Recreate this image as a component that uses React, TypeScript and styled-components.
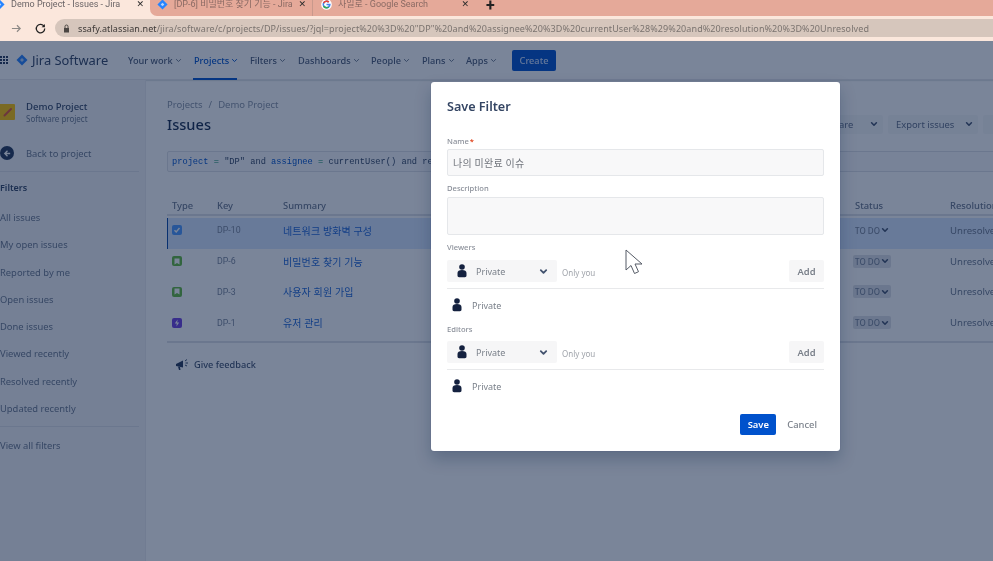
import React from "react";
import styled, { createGlobalStyle } from "styled-components";

const Global = createGlobalStyle`
  html, body { margin: 0; padding: 0; height: 100%; overflow: hidden; background: #fff; }
  #root { height: 100%; }
  * { box-sizing: border-box; }
`;

const sans = `"Noto Sans", "Noto Sans CJK KR", sans-serif`;

const Screen = styled.div`
  width: 993px; height: 561px; overflow: hidden; display: flex; flex-direction: column;
  font-family: ${sans}; filter: blur(0.5px);
`;
const TabStrip = styled.div`
  height: 16px; flex: none; display: flex; background: #fbe7dc; overflow: hidden;
  font-family: Roboto, "Noto Sans CJK KR", sans-serif; font-size: 9px; line-height: 9px;
`;
const Tab = styled.div<{ $w: number; $active?: boolean; $pad?: number; $first?: boolean; $rule?: boolean }>`
  width: ${p => p.$w}px; flex: none; display: flex; align-items: center; gap: 6px; height: 16px;
  padding: 0 6px 7px ${p => p.$pad ?? 6}px;
  background: ${p => (p.$active ? "#fbe7dc" : "#e5a999")};
  color: ${p => (p.$active ? "#6a6466" : "#8a6a64")};
  border-bottom-left-radius: ${p => (p.$first ? "7px" : "0")};
  box-shadow: ${p => (p.$rule ? "inset 1px 0 0 #c9998c" : "none")};
  overflow: hidden; white-space: nowrap;
`;
const TabTitle = styled.span` flex: 1; overflow: hidden; padding: 1px 0; `;
const TabClose = styled.span` color: #2c2c2c; font-size: 9px; font-weight: 700; font-family: "DejaVu Sans", sans-serif; `;
const TabRest = styled.div`
  flex: 1; background: #e5a999; padding: 0 0 0 11px; font-size: 16px; line-height: 11px; font-weight: 700; color: #222;
`;
const UrlBar = styled.div`
  height: 25px; flex: none; background: #fbe7dc; display: flex; align-items: center; padding: 3px 0 4px;
`;
const UrlNavIcons = styled.div` width: 55px; flex: none; display: flex; align-items: center; gap: 13px; padding-left: 11px; `;
const UrlPill = styled.div`
  flex: 1; height: 18px; background: #d6c6bc; border-radius: 9px 0 0 9px; display: flex; align-items: center; gap: 8px;
  padding-left: 8px; font-size: 9px; color: #7a736f; white-space: nowrap; overflow: hidden; letter-spacing: 0.09px;
`;
const UrlHost = styled.span` color: #3d3937; `;

const Page = styled.div` position: relative; flex: 1; min-height: 0; background: #fff; overflow: hidden; `;
const Blanket = styled.div` position: absolute; inset: 0; background: rgba(9, 30, 66, 0.54); `;

const Nav = styled.div`
  height: 39px; display: flex; align-items: center; border-bottom: 1px solid #e6e8ec;
  box-shadow: 0 1px 1px rgba(9,30,66,.12);
`;
const Apps = styled.div` display: grid; grid-template-columns: repeat(3, 2px); gap: 1px; width: 8px; `;
const AppDot = styled.i` width: 2px; height: 2px; background: #253858; display: block; `;
const Brand = styled.div` display: flex; align-items: center; gap: 4px; margin-left: 8px; width: 112px; `;
const BrandText = styled.span` font-size: 12.9px; color: #344563; `;
const NavItem = styled.div<{ $active?: boolean; $w: number }>`
  position: relative; width: ${p => p.$w}px; height: 39px; display: flex; align-items: center; gap: 2px; flex: none;
  font-size: 9.2px; font-weight: 500; color: ${p => (p.$active ? "#0052cc" : "#4c5b76")};
  &::after { content: ""; display: ${p => (p.$active ? "block" : "none")}; position: absolute; left: -1px; width: 44px; bottom: 0; height: 2px; background: #0052cc; }
`;
const CreateButton = styled.div`
  width: 44px; height: 21px; background: #0052cc; border-radius: 2px; color: #cfe0ff; font-size: 9.2px; font-weight: 500;
  display: flex; align-items: center; justify-content: center; margin-left: 7px;
`;

const Body = styled.div` height: 481px; display: flex; `;
const Sidebar = styled.div`
  width: 146px; flex: none; background: #f4f5f7; border-right: 1px solid #ebecf0; display: flex; flex-direction: column;
  font-size: 9.4px; color: #6b778c; padding-top: 24px;
`;
const ProjectRow = styled.div` display: flex; align-items: center; gap: 11px; height: 16px; `;
const ProjectAvatar = styled.div` width: 15px; height: 16px; background: #ffc400; border-radius: 0 1px 1px 0; display: flex; align-items: center; justify-content: center; flex: none; `;
const ProjectName = styled.div` font-size: 9.5px; font-weight: 500; color: #344563; line-height: 13px; `;
const ProjectSub = styled.div` font-size: 8px; color: #6b778c; line-height: 12px; `;
const BackRow = styled.div` display: flex; align-items: center; gap: 12px; margin-top: 26px; height: 14px; color: #6b778c; `;
const BackCircle = styled.div` width: 14px; height: 14px; border-radius: 50%; background: #253858; flex: none; display: flex; align-items: center; justify-content: center; `;
const SideRule = styled.div<{ $mt: number }>` height: 1px; background: #dfe1e6; margin: ${p => p.$mt}px 6px 0 0; `;
const FilterHead = styled.div` font-size: 9px; font-weight: 600; color: #344563; margin: 10px 0 10px; line-height: 12px; `;
const SideLink = styled.div<{ $mt?: number }>` height: 27.3px; line-height: 27.3px; margin-top: ${p => p.$mt ?? 0}px; color: #6b778c; white-space: nowrap; `;
const Main = styled.div` flex: 1; min-width: 0; padding: 18px 0 0 21px; color: #172b4d; overflow: hidden; `;
const Crumbs = styled.div` font-size: 9.5px; color: #8993a4; line-height: 13px; display: flex; gap: 6px; `;
const HeadRow = styled.div` height: 26px; display: flex; align-items: center; `;
const Title = styled.h1` margin: 0; font-size: 14.6px; font-weight: 500; color: #172b4d; line-height: 22px; width: 653px; flex: none; `;
const HeadButton = styled.div<{ $w: number }>`
  width: ${p => p.$w}px; height: 19px; flex: none; margin-right: 5px; background: #f7f8f9; border-radius: 2px; display: flex; align-items: center;
  padding: 0 5px 0 8px; justify-content: space-between; font-size: 9.4px; color: #5e6c84; white-space: nowrap;
`;
const JqlBox = styled.div`
  height: 21px; margin-top: 14px; width: 840px; background: #fafbfc; border: 1px solid #dfe1e6; border-radius: 2px;
  display: flex; align-items: center; padding-left: 4px;
  font-family: "Liberation Mono", monospace; font-size: 8.7px; white-space: pre; color: #344563;
`;
const JqlKey = styled.span` color: #0052cc; `;
const JqlOp = styled.span` color: #00875a; `;
const Table = styled.div` margin-top: 25px; width: 840px; border-bottom: 2px solid #dfe1e6; `;
const Row = styled.div<{ $selected?: boolean; $head?: boolean }>`
  display: grid; grid-template-columns: 45px 66px 572px 95px 1fr;
  align-items: center; height: ${p => (p.$head ? "19px" : "30.8px")}; padding-left: 5px;
  padding-bottom: ${p => (p.$head ? "0" : "6px")};
  background: ${p => (p.$selected ? "#d7e6ff" : "transparent")};
  box-shadow: ${p => (p.$selected ? "inset 1px 0 0 #0747a6" : "none")};
  font-size: 9.4px; white-space: nowrap; overflow: hidden;
  ${p => p.$head ? "border-bottom: 2px solid #dfe1e6; font-weight: 500; margin-bottom: 2px;" : ""}
`;
const HeadCell = styled.div` color: #6b778c; `;
const KeyCell = styled.div` font-family: Roboto, sans-serif; font-size: 8.8px; color: #7a869a; `;
const SummaryCell = styled.div` font-size: 10px; color: #1f66d6; letter-spacing: 0.1px; `;
const StatusPill = styled.div<{ $plain?: boolean }>`
  display: inline-flex; align-items: center; gap: 1px; height: 13px; width: 38px; margin-left: -2px; justify-content: center; border-radius: 2px;
  font-size: 8px; font-weight: 500; color: #7a869a; background: ${p => (p.$plain ? "transparent" : "#dfe1e6")}; justify-self: start;
`;
const ResCell = styled.div` color: #6b778c; font-size: 9.6px; `;
const TypeIcon = styled.div<{ $c: string }>`
  width: 10px; height: 10px; border-radius: 2px; background: ${p => p.$c}; display: flex; align-items: center; justify-content: center;
`;
const Feedback = styled.div` display: flex; align-items: center; gap: 5px; margin: 15px 0 0 8px; font-size: 9.2px; font-weight: 500; color: #42526e; `;

const Modal = styled.div`
  position: absolute; left: 431px; top: 41px; width: 409px; height: 369px; background: #fff; border-radius: 3px;
  box-shadow: 0 0 1px rgba(9,30,66,.3), 0 8px 16px rgba(9,30,66,.25);
  padding: 16px 16px 0; display: flex; flex-direction: column; color: #172b4d;
`;
const ModalTitle = styled.h2` margin: 0; font-size: 12.6px; font-weight: 600; color: #344563; line-height: 18px; `;
const Label = styled.div<{ $mt: number }>` margin-top: ${p => p.$mt}px; height: 10px; font-size: 7.6px; line-height: 10px; color: #8a8f99; font-weight: 500; `;
const Required = styled.span` color: #de350b; margin-left: 1px; `;
const TextInput = styled.div`
  height: 27px; margin-top: 3px; background: #f8f8f9; border: 1px solid #e5e7ea; border-radius: 2px; padding-left: 5px;
  font-size: 10px; color: #70747c; display: flex; align-items: center; letter-spacing: 0.2px;
`;
const TextArea = styled.div` height: 38px; margin-top: 4px; background: #f8f8f9; border: 1px solid #e5e7ea; border-radius: 2px; `;
const ShareRow = styled.div<{ $mt: number }>` display: flex; align-items: center; margin-top: ${p => p.$mt}px; height: 22px; `;
const Select = styled.div`
  width: 110px; height: 22px; background: #f6f6f7; border-radius: 2px; display: flex; align-items: center; padding: 0 9px 0 10px;
  gap: 9px; font-size: 9px; color: #7a808a; flex: none;
`;
const SelectText = styled.span` flex: 1; `;
const OnlyYou = styled.span` margin-left: 5px; padding-top: 2px; font-size: 8px; color: #a0a4ab; flex: 1; `;
const AddButton = styled.div`
  width: 35px; height: 22px; background: #f6f6f7; border-radius: 2px; font-size: 9.4px; font-weight: 600; color: #7a808a;
  display: flex; align-items: center; justify-content: center;
`;
const ShareRule = styled.div` height: 1px; background: #e8e9eb; margin-top: 6px; `;
const PersonRow = styled.div` display: flex; align-items: center; height: 32px; padding-left: 5px; gap: 10px; font-size: 9px; color: #7a808a; `;
const Actions = styled.div` display: flex; align-items: center; justify-content: flex-end; margin-top: 12px; padding-right: 7px; gap: 11px; `;
const SaveButton = styled.div`
  width: 36px; height: 21px; background: #0052cc; border-radius: 2px; color: #fff; font-size: 9.4px; font-weight: 600;
  display: flex; align-items: center; justify-content: center;
`;
const CancelButton = styled.div` font-size: 9.4px; color: #7a808a; font-weight: 500; `;
const Cursor = styled.svg` position: absolute; left: 625px; top: 208px; `;

const Chevron = ({ c = "#42526e", s = 8, w = 2 }: { c?: string; s?: number; w?: number }) => (
  <svg width={s} height={s} viewBox="0 0 10 10" style={{ flex: "none" }}>
    <path d="M2 3.5 5 6.5 8 3.5" fill="none" stroke={c} strokeWidth={w} strokeLinecap="round" strokeLinejoin="round" />
  </svg>
);
const Diamond = ({ s = 12, c = "#2684ff" }: { s?: number; c?: string }) => (
  <svg width={s} height={s} viewBox="0 0 12 12" style={{ flex: "none" }}>
    <path d="M6 .5 11.5 6 6 11.5.5 6Z" fill={c} />
    <path d="M6 4 8 6 6 8 4 6Z" fill="#fff" opacity=".65" />
  </svg>
);
const GoogleG = () => (
  <svg width="11" height="11" viewBox="0 0 12 12" style={{ flex: "none" }}>
    <circle cx="6" cy="6" r="5.8" fill="#fff" />
    <path d="M10.4 5.2H6v1.7h2.5A2.6 2.6 0 1 1 7.8 4l1.3-1.3A4.4 4.4 0 1 0 10.5 6c0-.3 0-.5-.1-.8Z" fill="#4285f4" />
    <path d="M2.1 3.9 3.6 5A2.6 2.6 0 0 1 7.8 4l1.3-1.3A4.4 4.4 0 0 0 2.1 3.9Z" fill="#ea4335" />
    <path d="M2.1 8.1 3.6 7a2.6 2.6 0 0 0 4 1.1l1.4 1.2A4.4 4.4 0 0 1 2.1 8.1Z" fill="#34a853" />
  </svg>
);
const Person = () => (
  <svg width="10" height="14" viewBox="0 0 10 14" style={{ flex: "none" }}>
    <circle cx="5" cy="3" r="2.8" fill="#14213f" />
    <path d="M.5 9c0-2 1.6-3 4.5-3s4.5 1 4.5 3v2.6c0 1-.7 1.6-1.6 1.6H2.1c-.9 0-1.6-.6-1.6-1.6Z" fill="#14213f" />
  </svg>
);

const navItems: [string, number, boolean?][] = [
  ["Your work", 66], ["Projects", 56, true], ["Filters", 48], ["Dashboards", 73], ["People", 51], ["Plans", 44], ["Apps", 39],
];
const sideLinks = ["All issues", "My open issues", "Reported by me", "Open issues", "Done issues", "Viewed recently", "Resolved recently", "Updated recently"];
const issues = [
  { k: "DP-10", s: "네트워크 방화벽 구성", c: "#4c9aff", g: "check", sel: true },
  { k: "DP-6", s: "비밀번호 찾기 기능", c: "#63ba3c", g: "story" },
  { k: "DP-3", s: "사용자 회원 가입", c: "#63ba3c", g: "story" },
  { k: "DP-1", s: "유저 관리", c: "#6f3fe0", g: "epic" },
];
const TypeGlyph = ({ g }: { g: string }) =>
  g === "check" ? (
    <svg width="8" height="8" viewBox="0 0 8 8"><path d="M1.5 4.2 3.2 6 6.5 2" fill="none" stroke="#fff" strokeWidth="1.4" /></svg>
  ) : g === "story" ? (
    <svg width="6" height="7" viewBox="0 0 6 7"><path d="M.5.5h5v6L3 5 .5 6.5Z" fill="#fff" /></svg>
  ) : (
    <svg width="6" height="8" viewBox="0 0 6 8"><path d="M3.6.5.8 4.5h2L2.4 7.5l2.8-4h-2Z" fill="#fff" /></svg>
  );

const Sharing = ({ mt }: { mt: number }) => (
  <>
    <ShareRow $mt={mt}>
      <Select>
        <Person />
        <SelectText>Private</SelectText>
        <Chevron c="#42526e" s={9} />
      </Select>
      <OnlyYou>Only you</OnlyYou>
      <AddButton>Add</AddButton>
    </ShareRow>
    <ShareRule />
    <PersonRow>
      <Person />
      <span>Private</span>
    </PersonRow>
  </>
);

export default function App() {
  return (
    <Screen>
      <Global />
      <TabStrip>
        <Tab $w={150} $active $pad={0}>
          <span style={{ marginLeft: -6, display: "flex" }}><Diamond s={11} /></span>
          <TabTitle>Demo Project - Issues - Jira</TabTitle>
          <TabClose>✕</TabClose>
        </Tab>
        <Tab $w={162} $pad={7} $first>
          <Diamond s={11} />
          <TabTitle>[DP-6] 비밀번호 찾기 기능 - Jira</TabTitle>
          <TabClose>✕</TabClose>
        </Tab>
        <Tab $w={163} $pad={9} $rule>
          <GoogleG />
          <TabTitle>사일로 - Google Search</TabTitle>
          <TabClose>✕</TabClose>
        </Tab>
        <TabRest>+</TabRest>
      </TabStrip>
      <UrlBar>
        <UrlNavIcons>
          <svg width="11" height="11" viewBox="0 0 12 12"><path d="M1 6h9M6.5 2.5 10 6 6.5 9.5" fill="none" stroke="#8d8986" strokeWidth="1.3" /></svg>
          <svg width="11" height="11" viewBox="0 0 12 12"><path d="M10 3.8A4.6 4.6 0 1 0 10.6 6" fill="none" stroke="#222" strokeWidth="1.4" /><path d="M10.8 1v3.6H7.2Z" fill="#222" /></svg>
        </UrlNavIcons>
        <UrlPill>
          <svg width="7" height="9" viewBox="0 0 7 9" style={{ flex: "none" }}><path d="M1 4h5v4.5H1Z" fill="#4b4643" /><path d="M2 4V2.5a1.5 1.5 0 0 1 3 0V4" fill="none" stroke="#4b4643" /></svg>
          <span><UrlHost>ssafy.atlassian.net</UrlHost>/jira/software/c/projects/DP/issues/?jql=project%20%3D%20"DP"%20and%20assignee%20%3D%20currentUser%28%29%20and%20resolution%20%3D%20Unresolved</span>
        </UrlPill>
      </UrlBar>
      <Page>
        <Nav>
          <Apps>{Array.from({ length: 9 }, (_, i) => <AppDot key={i} />)}</Apps>
          <Brand>
            <Diamond s={12} c="#2684ff" />
            <BrandText>Jira Software</BrandText>
          </Brand>
          {navItems.map(([t, w, a]) => (
            <NavItem key={t} $w={w} $active={a}>
              {t}
              <Chevron c={a ? "#0052cc" : "#6b778c"} s={7} w={1.4} />
            </NavItem>
          ))}
          <CreateButton>Create</CreateButton>
        </Nav>
        <Body>
          <Sidebar>
            <ProjectRow>
              <ProjectAvatar>
                <svg width="10" height="10" viewBox="0 0 10 10"><path d="M1.5 8.5 8 2" stroke="#e0533a" strokeWidth="2" strokeLinecap="round" /></svg>
              </ProjectAvatar>
              <div>
                <ProjectName>Demo Project</ProjectName>
                <ProjectSub>Software project</ProjectSub>
              </div>
            </ProjectRow>
            <BackRow>
              <BackCircle>
                <svg width="9" height="9" viewBox="0 0 10 10"><path d="M8 5H2.5M5 2 2 5l3 3" fill="none" stroke="#fff" strokeWidth="1.5" /></svg>
              </BackCircle>
              Back to project
            </BackRow>
            <SideRule $mt={11} />
            <FilterHead>Filters</FilterHead>
            {sideLinks.map(l => <SideLink key={l}>{l}</SideLink>)}
            <SideRule $mt={4} />
            <SideLink $mt={5}>View all filters</SideLink>
          </Sidebar>
          <Main>
            <Crumbs><span>Projects</span><span>/</span><span>Demo Project</span></Crumbs>
            <HeadRow>
              <Title>Issues</Title>
              <HeadButton $w={63}>Share<Chevron s={8} /></HeadButton>
              <HeadButton $w={90}>Export issues<Chevron s={8} /></HeadButton>
              <HeadButton $w={40} />
            </HeadRow>
            <JqlBox>
              <span>
                <JqlKey>project</JqlKey> <JqlOp>=</JqlOp> "DP" and <JqlKey>assignee</JqlKey> <JqlOp>=</JqlOp> currentUser() and resolution = Unresolved
              </span>
            </JqlBox>
            <Table>
              <Row $head>
                <HeadCell>Type</HeadCell><HeadCell>Key</HeadCell><HeadCell>Summary</HeadCell><HeadCell>Status</HeadCell><HeadCell>Resolution</HeadCell>
              </Row>
              {issues.map(i => (
                <Row key={i.k} $selected={i.sel}>
                  <TypeIcon $c={i.c}><TypeGlyph g={i.g} /></TypeIcon>
                  <KeyCell>{i.k}</KeyCell>
                  <SummaryCell>{i.s}</SummaryCell>
                  <StatusPill $plain={i.sel}>TO DO<Chevron s={8} /></StatusPill>
                  <ResCell>Unresolved</ResCell>
                </Row>
              ))}
            </Table>
            <Feedback>
              <svg width="14" height="13" viewBox="0 0 14 13">
                <path d="M1 6 8 2.5v7L1 8Z" fill="#253858" /><path d="M3 8.5 4 12h1.5L5 9" fill="#253858" />
                <path d="M10 3l2-1.5M10.5 5H13M10 7l2 1" stroke="#253858" strokeWidth=".9" fill="none" />
              </svg>
              Give feedback
            </Feedback>
          </Main>
        </Body>
        <Blanket />
        <Modal>
          <ModalTitle>Save Filter</ModalTitle>
          <Label $mt={20}>Name<Required>*</Required></Label>
          <TextInput>나의 미완료 이슈</TextInput>
          <Label $mt={7}>Description</Label>
          <TextArea />
          <Label $mt={7}>Viewers</Label>
          <Sharing mt={8} />
          <Label $mt={3}>Editors</Label>
          <Sharing mt={7} />
          <Actions>
            <SaveButton>Save</SaveButton>
            <CancelButton>Cancel</CancelButton>
          </Actions>
        </Modal>
        <Cursor width="19" height="27" viewBox="0 0 19 27">
          <path d="M1 1v20l5-4.5 3.5 8 4-1.8-3.5-7.7h7Z" fill="#fff" stroke="#555b66" strokeWidth="1" />
        </Cursor>
      </Page>
    </Screen>
  );
}
